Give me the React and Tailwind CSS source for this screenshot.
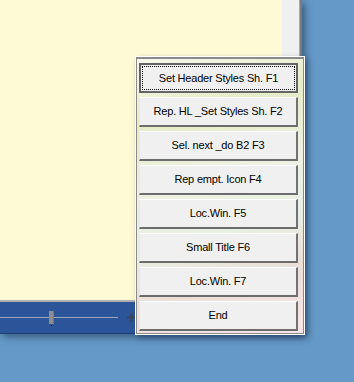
const buttons = [
  'Set Header Styles Sh. F1',
  'Rep. HL _Set Styles Sh. F2',
  'Sel. next _do B2 F3',
  'Rep empt. Icon F4',
  'Loc.Win. F5',
  'Small Title F6',
  'Loc.Win. F7',
  'End',
]

function DlgButton({ label, focused }) {
  if (focused) {
    return (
      <div className="relative flex h-[30px] w-[159px] items-center justify-center border-2 border-[#646464] bg-[#f0f0f0]">
        <div className="absolute inset-[1px] border border-dotted border-black" />
        <span>{label}</span>
      </div>
    )
  }
  return (
    <div className="flex h-[30px] w-[159px] items-center justify-center border-t border-l border-t-white border-l-[#e6e6e6] border-r-2 border-b-2 border-r-[#727272] border-b-[#6c6c6c] bg-[#f0f0f0]">
      <span>{label}</span>
    </div>
  )
}

export default function App() {
  return (
    <div
      className="relative h-[382px] w-[354px] overflow-hidden bg-[#6599c7] text-[11px] tracking-[-0.2px] text-black"
      style={{ fontFamily: '"Liberation Sans", Arial, sans-serif' }}
    >
      {/* app window */}
      <div className="flex h-[334px] w-[302px] flex-col shadow-[3px_3px_7px_rgba(20,40,70,0.55)]">
        <div className="flex h-[300px]">
          <div className="flex-1 bg-[#fffad6]" />
          <div className="w-[17px] bg-[#f0f0f0]" />
          <div className="w-px bg-[#a8a8a8]" />
          <div className="w-[2px] bg-[#7a7a7a]" />
        </div>
        <div className="h-[2px] bg-[#b0b0b0]" />
        <div className="flex flex-1 items-center bg-[#2b5598] border-b border-[#1f3f70]">
          <div className="relative h-px w-[118px] shrink-0 bg-[#9aa6bd]">
            <div className="absolute left-[49px] top-[-6px] h-[13px] w-[5px] bg-[#8e8e8e] border-r border-[#777]" />
            <div className="absolute left-[51px] top-[8px] h-px w-px bg-black" />
          </div>
          <svg className="ml-[9px] shrink-0" width="9" height="9" viewBox="0 0 9 9">
            <path d="M4.5 0v9M0 4.5h9" stroke="#3a4660" strokeWidth="2" />
          </svg>
        </div>
      </div>

      {/* button dialog */}
      <div className="absolute left-[135px] top-[56px] h-[279px] w-[170px] border border-white shadow-[3px_3px_6px_rgba(20,40,70,0.45)]">
        <div className="flex h-full flex-col gap-[4px] border border-t-2 border-[#8a8a8a] bg-[linear-gradient(165deg,#f5f7ec_0%,#e5ecc8_22%,#eef1e4_45%,#e8efe4_62%,#eadfd8_78%,#f9e4e9_100%)] pl-[2px] pt-[4px]">
          {buttons.map((b, i) => (
            <DlgButton key={b} label={b} focused={i === 0} />
          ))}
        </div>
      </div>
    </div>
  )
}
